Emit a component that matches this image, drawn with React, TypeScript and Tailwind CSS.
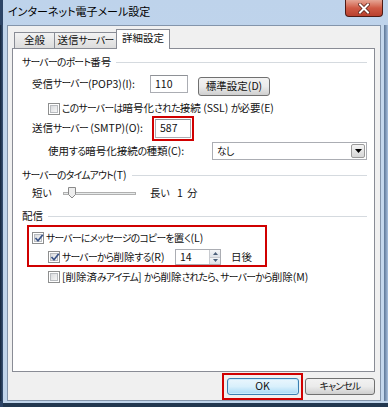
import React from 'react';

// Meiryo UI draws kana much narrower than kanji; squeeze kana runs to match
function J({ t }: { t: string }) {
  const parts = t.split(/([\u3041-\u30ff]+)/);
  return (
    <>
      {parts.map((p, i) =>
        i % 2 === 1 ? (
          <span key={i} className="text-[9.8px] tracking-[-0.7px]">
            {p}
          </span>
        ) : (
          <React.Fragment key={i}>{p}</React.Fragment>
        )
      )}
    </>
  );
}

function CheckBox({ checked }: { checked?: boolean }) {
  return (
    <span className="flex h-[12px] w-[12px] shrink-0 items-center justify-center border border-[#8e8f8f] bg-white">
      <span className="relative flex h-[8px] w-[8px] items-center justify-center border border-[#b9bcc0] bg-gradient-to-br from-[#d9dbde] to-[#f7f7f7]">
        {checked && (
          <svg width="10" height="10" viewBox="0 0 10 10" className="absolute -top-[2px] -left-[1px]">
            <path d="M1.5 5 L4 7.8 L8.8 1.8" fill="none" stroke="#3b5488" strokeWidth="1.7" />
          </svg>
        )}
      </span>
    </span>
  );
}

function GroupHeader({ label, top }: { label: string; top: string }) {
  return (
    <div className={`flex h-[14px] items-center pl-[9px] pr-[7px] ${top}`}>
      <span className="whitespace-nowrap">
        <J t={label} />
      </span>
      <div className="ml-[5px] h-px flex-1 bg-[#d5dadf]" />
    </div>
  );
}

function TextInput({ value, className }: { value: string; className: string }) {
  return (
    <div className={`flex items-center border border-[#abadb3] border-t-[#8e9196] bg-white pl-[4px] ${className}`}>
      {value}
    </div>
  );
}

function Btn({ label, className }: { label: string; className: string }) {
  return (
    <div
      className={`flex items-center justify-center whitespace-nowrap rounded-[3px] border border-[#707070] bg-gradient-to-b from-[#f2f2f2] via-[#ebebeb] to-[#cfcfcf] ${className}`}
    >
      <J t={label} />
    </div>
  );
}

export default function App() {
  return (
    <div className="flex h-[407px] w-[388px] flex-col overflow-hidden bg-gradient-to-b from-[#bed3eb] to-[#c9daee] font-['Noto_Sans_CJK_JP',sans-serif] text-[10.5px] leading-none text-[#111] [font-feature-settings:'palt']">
      {/* Title bar */}
      <div className="flex h-[25px] shrink-0 items-start justify-between border-l-[3px] border-[#2c4466]">
        <div className="pt-[6px] pl-[5px] text-[11px] text-black">インターネット電子メール設定</div>
        <div className="mr-[5px] flex h-[17px] w-[38px] items-center justify-center rounded-b-[4px] border border-t-0 border-[#4e1a14] bg-gradient-to-b from-[#e5a595] via-[#cf5a45] to-[#b8402e]">
          <svg width="12" height="11" viewBox="0 0 12 11">
            <path d="M2 1.5 L10 9.5 M10 1.5 L2 9.5" stroke="#5a2119" strokeWidth="3.6" strokeLinecap="square" />
            <path d="M2 1.5 L10 9.5 M10 1.5 L2 9.5" stroke="#fff" strokeWidth="2" strokeLinecap="square" />
          </svg>
        </div>
      </div>

      <div className="flex flex-1">
        {/* left frame */}
        <div className="flex w-[7px] shrink-0">
          <div className="w-[3px] bg-gradient-to-r from-[#14243a] to-[#3a5478]" />
          <div className="w-[4px] bg-[#c0d4ea]" />
        </div>

        {/* client */}
        <div className="flex w-[374px] flex-col border border-[#8495ab] bg-[#f0f0f0] px-[4px] pt-[3px]">
          {/* tabs */}
          <div className="relative z-10 -mb-px flex h-[20px] items-end pl-[2px]">
            <div className="mb-px flex h-[16px] w-[41px] items-center justify-center border border-b-0 border-[#898c95] bg-gradient-to-b from-[#f3f3f3] to-[#dcdcdc]">
              全般
            </div>
            <div className="-ml-px mb-px flex h-[16px] w-[63px] items-center justify-center whitespace-nowrap border border-b-0 border-[#898c95] bg-gradient-to-b from-[#f3f3f3] to-[#dcdcdc]">
              <J t="送信サーバー" />
            </div>
            <div className="-ml-px flex h-[20px] w-[54px] items-center justify-center border border-b-0 border-[#898c95] bg-white pb-[2px]">
              詳細設定
            </div>
          </div>

          {/* panel */}
          <div className="flex h-[324px] w-[363px] flex-col whitespace-nowrap border border-[#898c95] bg-white">
            <GroupHeader label="サーバーのポート番号" top="mt-[6px]" />

            <div className="mt-[6px] flex h-[21px] items-start pl-[19px]">
              <div className="flex h-[18px] w-[118px] items-center">
                <J t="受信サーバー (POP3)(I):" />
              </div>
              <TextInput value="110" className="h-[18px] w-[38px]" />
              <Btn label="標準設定(D)" className="mt-[2px] ml-[10px] h-[19px] w-[72px]" />
            </div>

            <div className="mt-[6px] flex h-[13px] items-center gap-[2px] pl-[35px]">
              <CheckBox />
              <span>
                <J t="このサーバーは暗号化された接続 (SSL) が必要(E)" />
              </span>
            </div>

            <div className="mt-[1px] flex h-[25px] items-center pl-[19px]">
              <div className="w-[120px]">
                <J t="送信サーバー (SMTP)(O):" />
              </div>
              <div className="flex h-[25px] w-[42px] items-center justify-center border-2 border-[#d00000]">
                <TextInput value="587" className="h-[19px] w-[36px]" />
              </div>
            </div>

            <div className="mt-[1px] flex h-[18px] items-center pl-[35px]">
              <div className="w-[164px]">
                <J t="使用する暗号化接続の種類(C):" />
              </div>
              <div className="flex h-[18px] w-[155px] items-center justify-between border border-[#abadb3] bg-white pr-[1px] pl-[4px]">
                <span>
                  <J t="なし" />
                </span>
                <div className="flex h-[14px] w-[14px] items-center justify-center rounded-[2px] border border-[#9a9a9a] bg-gradient-to-b from-[#f4f4f4] to-[#d6d6d6]">
                  <svg width="7" height="4" viewBox="0 0 7 4">
                    <path d="M0 0 L7 0 L3.5 4 Z" fill="#000" />
                  </svg>
                </div>
              </div>
            </div>

            <GroupHeader label="サーバーのタイムアウト(T)" top="mt-[8px]" />

            <div className="mt-[4px] flex h-[14px] items-center pl-[19px]">
              <div className="w-[31px]">
                <J t="短い" />
              </div>
              <div className="relative flex h-[14px] w-[73px] items-center">
                <div className="h-[3px] w-full border border-[#b0b0b0] bg-[#e7eaea]" />
                <svg width="8" height="12" viewBox="0 0 8 12" className="absolute top-[1px] left-[5px]">
                  <path d="M0.5 0.5 H7.5 V7.5 L4 11 L0.5 7.5 Z" fill="#eeeeee" stroke="#8a8a8a" />
                </svg>
              </div>
              <div className="ml-[14px]">
                <J t="長い" />
              </div>
              <div className="ml-[8px]">1</div>
              <div className="ml-[4px]">分</div>
            </div>

            <GroupHeader label="配信" top="mt-[9px]" />

            <div className="mt-[2px] ml-[14px] flex h-[42px] w-[240px] flex-col border-2 border-[#d00000]">
              <div className="mt-[4px] flex h-[14px] items-center gap-[2px] pl-[3px]">
                <CheckBox checked />
                <span>
                  <J t="サーバーにメッセージのコピーを置く(L)" />
                </span>
              </div>
              <div className="mt-[4px] flex h-[16px] items-center pl-[19px]">
                <CheckBox checked />
                <span className="ml-[2px] w-[113px]">
                  <J t="サーバーから削除する(R)" />
                </span>
                <div className="flex h-[16px] w-[46px] items-center justify-between border border-[#abadb3] bg-white pl-[4px]">
                  <span>14</span>
                  <div className="flex h-full w-[11px] flex-col border-l border-[#c8cbd0]">
                    <div className="flex flex-1 items-center justify-center bg-gradient-to-b from-[#f4f6f8] to-[#dde2e8]">
                      <svg width="5" height="3" viewBox="0 0 5 3"><path d="M0 3 L5 3 L2.5 0 Z" fill="#4c607a" /></svg>
                    </div>
                    <div className="flex flex-1 items-center justify-center border-t border-[#c8cbd0] bg-gradient-to-b from-[#f4f6f8] to-[#dde2e8]">
                      <svg width="5" height="3" viewBox="0 0 5 3"><path d="M0 0 L5 0 L2.5 3 Z" fill="#4c607a" /></svg>
                    </div>
                  </div>
                </div>
                <span className="ml-[10px]">日後</span>
              </div>
            </div>

            <div className="mt-[3px] flex h-[14px] items-center gap-[2px] pl-[35px]">
              <CheckBox />
              <span>
                <J t="[削除済みアイテム] から削除されたら、サーバーから削除(M)" />
              </span>
            </div>
          </div>

          {/* buttons */}
          <div className="flex items-start justify-end pr-[1px]">
            <div className="mt-[1px] flex h-[27px] w-[81px] items-center justify-center border-2 border-[#d00000]">
              <div className="flex h-[17px] w-[72px] items-center justify-center rounded-[3px] border border-[#3c7fb1] bg-gradient-to-b from-[#eaf6fd] via-[#d9f0fc] to-[#a7d9f5] shadow-[inset_0_0_0_1px_#c9ecfd]">
                OK
              </div>
            </div>
            <Btn label="キャンセル" className="mt-[6px] ml-[2px] h-[17px] w-[70px]" />
          </div>
        </div>

        {/* right frame */}
        <div className="flex w-[7px] shrink-0">
          <div className="w-[3px] bg-[#c4d7ec]" />
          <div className="w-[4px] bg-gradient-to-r from-[#5d7696] to-[#a9c1de]" />
        </div>
      </div>

      {/* bottom frame */}
      <div className="flex h-[6px] shrink-0 flex-col border-l-[3px] border-[#2c4466]">
        <div className="h-[2px] bg-[#c0d4ea]" />
        <div className="flex-1 bg-[#22374f]" />
      </div>
    </div>
  );
}
